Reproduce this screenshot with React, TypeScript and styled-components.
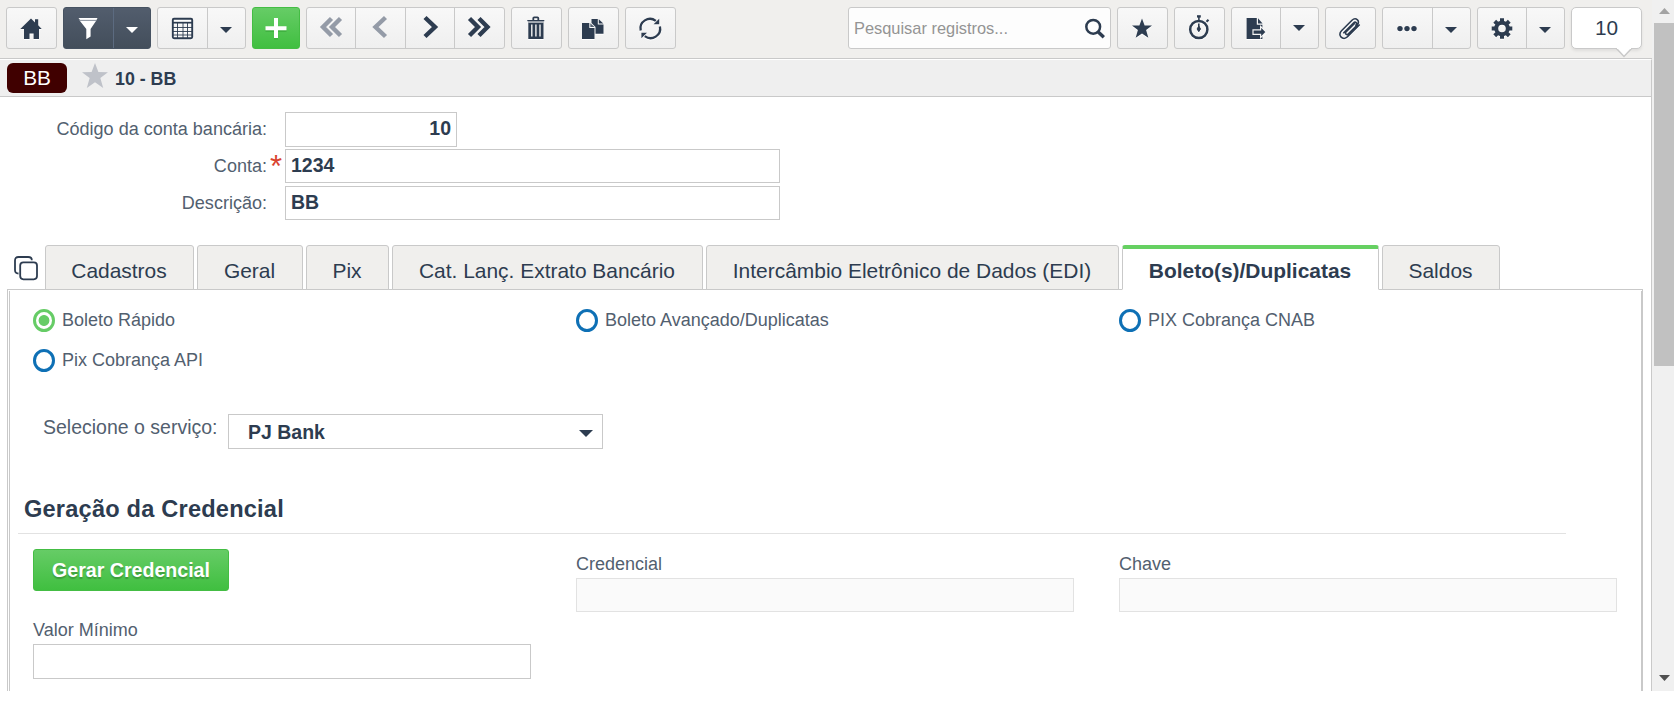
import React from "react";
import styled, { createGlobalStyle, css } from "styled-components";

const ink = "#2d3c50";
const line = "#c9c9c9";

const Global = createGlobalStyle`
  * { box-sizing: border-box; }
  body { margin: 0; background: #fff; font-family: "Liberation Sans", Arial, sans-serif; color: ${ink}; overflow: hidden; }
`;

const Screen = styled.div`
  display: flex;
  width: 1674px;
  height: 691px;
  overflow: hidden;
  background: #fff;
`;

const Main = styled.main`
  width: 1652px;
  height: 691px;
  display: flex;
  flex-direction: column;
  flex: none;
`;

const Toolbar = styled.header`
  height: 59px;
  flex: none;
  padding: 7px 0 0 6px;
  background: #f0efed;
  border-bottom: 1px solid ${line};
  display: flex;
  align-items: flex-start;
  gap: 6px;
`;

const Spacer = styled.div`
  flex: 0 0 160px;
`;

type Tone = "light" | "dark" | "green";

const tones = {
  light: css`
    background: linear-gradient(#f8f8f8, #efefef);
    border-color: ${line};
    color: ${ink};
    --split: ${line};
  `,
  dark: css`
    background: linear-gradient(#525d6d, #434e5b);
    border-color: #465261;
    color: #fff;
    --split: #5c6b80;
  `,
  green: css`
    background: linear-gradient(#66cc66, #40bf40);
    border-color: #44bd44;
    color: #fff;
    --split: #40bf40;
  `,
};

const Group = styled.div<{ $tone?: Tone; $w: number }>`
  display: flex;
  flex: none;
  width: ${(p) => p.$w}px;
  height: 42px;
  border: 1px solid;
  border-radius: 3px;
  ${(p) => tones[p.$tone ?? "light"]}
`;

const Cell = styled.button<{ $w?: number; $muted?: boolean }>`
  ${(p) => (p.$w ? `flex: 0 0 ${p.$w}px;` : "flex: 1;")}
  padding: 0 1px 0 0;
  border: 0;
  background: none;
  display: flex;
  align-items: center;
  justify-content: center;
  color: ${(p) => (p.$muted ? "#949ba7" : "inherit")};
  & + & {
    border-left: 1px solid var(--split);
  }
`;

const Glyph = styled.svg<{ $glow?: boolean }>`
  display: block;
  width: 24px;
  height: 24px;
  flex: none;
  overflow: visible;
  ${(p) => p.$glow && "filter: drop-shadow(0 1.5px 0 #fff);"}
`;

const Caret = styled.span<{ $up?: boolean }>`
  width: 0;
  height: 0;
  margin-top: ${(p) => (p.$up ? 0 : 4)}px;
  border: 6px solid transparent;
  border-top-color: currentColor;
  border-bottom: 0;
`;

const Search = styled.div`
  flex: none;
  width: 263px;
  height: 42px;
  padding: 0 4px 0 5px;
  border: 1px solid ${line};
  border-radius: 3px;
  background: #fdfdfd;
  display: flex;
  align-items: center;
  justify-content: space-between;
  font-size: 16.4px;
  color: #949494;
  svg { color: ${ink}; }
`;

const Counter = styled.div`
  position: relative;
  flex: none;
  width: 71px;
  height: 42px;
  padding-bottom: 1px;
  border: 1px solid ${line};
  border-radius: 5px;
  background: #fff;
  box-shadow: 0 2px 3px rgba(0, 0, 0, 0.07);
  display: flex;
  align-items: center;
  justify-content: center;
  font-size: 20.8px;
  svg {
    position: absolute;
    left: 43px;
    top: 40px;
  }
`;

const TitleBar = styled.div`
  height: 38px;
  flex: none;
  border-top: 1px solid #fff;
  border-bottom: 1px solid ${line};
  border-right: 1px solid ${line};
  background: #efefef;
  display: flex;
  align-items: center;
  padding-left: 7px;
`;

const Badge = styled.span`
  width: 60px;
  height: 30px;
  border-radius: 6px;
  background: #400000;
  color: #fff;
  font-size: 20.8px;
  line-height: 30px;
  text-align: center;
`;

const FavStar = styled.svg`
  width: 26px;
  height: 25px;
  margin: -5px 7px 0 15px;
`;

const Title = styled.h1`
  margin: 2px 0 0;
  font-size: 17.8px;
  font-weight: 700;
`;

const Body = styled.div`
  flex: 1;
  border-right: 1px solid ${line};
  display: flex;
  flex-direction: column;
  min-height: 0;
`;

const Fields = styled.div`
  flex: none;
  height: 148px;
  padding-top: 15px;
`;

const FieldRow = styled.label<{ $h: number; $gap: number }>`
  display: flex;
  height: ${(p) => p.$h}px;
  margin-bottom: ${(p) => p.$gap}px;
`;

const FieldName = styled.span`
  width: 267px;
  text-align: right;
  font-size: 18.05px;
  line-height: 35px;
  color: #52606f;
  white-space: nowrap;
`;

const Mark = styled.span`
  width: 18px;
  padding-left: 3px;
  font-size: 31px;
  line-height: 35px;
  color: #d9432f;
`;

const Box = styled.span<{ $w: number; $right?: boolean }>`
  width: ${(p) => p.$w}px;
  border: 1px solid ${line};
  background: #fff;
  padding: 0 5px;
  font-size: 19.5px;
  font-weight: 700;
  line-height: 31px;
  text-align: ${(p) => (p.$right ? "right" : "left")};
`;

const Tabs = styled.nav`
  flex: none;
  height: 44px;
  padding-left: 13px;
  display: flex;
  position: relative;
  z-index: 1;
`;

const CopyTabs = styled.svg`
  width: 24px;
  height: 25px;
  margin: 11px 7px 0 1px;
  flex: none;
`;

const Tab = styled.div<{ $w: number; $active?: boolean }>`
  flex: none;
  width: ${(p) => p.$w}px;
  height: 45px;
  margin-right: 3px;
  padding: ${(p) => (p.$active ? 9 : 12)}px 1px 0 0;
  border: 1px solid ${line};
  border-radius: 3px 3px 0 0;
  background: #f0efed;
  font-size: 20.95px;
  line-height: 25px;
  text-align: center;
  white-space: nowrap;
  ${(p) =>
    p.$active &&
    css`
      background: #fff;
      border-top: 4px solid #66d062;
      border-bottom-color: #fff;
      font-weight: 700;
    `}
`;

const Frame = styled.section`
  flex: 1;
  min-height: 0;
  width: 1636px;
  margin-left: 7px;
  border: solid ${line};
  border-width: 1px 1px 0;
  padding: 1px 0 0 1px;
  overflow: hidden;
`;

const Pane = styled.div`
  height: 420px;
  border-left: 1px solid ${line};
  border-right: 1px solid ${line};
  padding: 17px 0 0 8px;
`;

const Radios = styled.div`
  display: grid;
  grid-template-columns: repeat(3, 543px);
  row-gap: 16px;
  padding-left: 15px;
`;

const Radio = styled.div`
  display: flex;
  align-items: center;
  height: 24px;
  font-size: 18px;
  color: #52606f;
`;

const Dot = styled.span<{ $on?: boolean }>`
  width: 22px;
  height: 23px;
  margin-right: 7px;
  border-radius: 50%;
  border: 3px solid ${(p) => (p.$on ? "#66cc66" : "#0e70b5")};
  ${(p) => p.$on && "background: radial-gradient(circle, #66cc66 5px, #fff 5.8px);"}
`;

const Service = styled.div`
  display: flex;
  margin: 42px 0 0 25px;
`;

const ServiceName = styled.span`
  width: 185px;
  padding-top: 1px;
  font-size: 19.5px;
  line-height: 24px;
  color: #52606f;
`;

const Select = styled.div`
  width: 375px;
  height: 35px;
  border: 1px solid ${line};
  padding: 1px 9px 0 19px;
  display: flex;
  justify-content: space-between;
  align-items: center;
  font-size: 19.5px;
  font-weight: 700;
`;

const SelectArrow = styled.span`
  border: 7px solid transparent;
  border-top-color: ${ink};
  border-bottom: 0;
  margin-top: 2px;
`;

const Heading = styled.h2`
  width: 1548px;
  height: 47px;
  margin: 38px 0 15px;
  padding: 7px 0 0 6px;
  border-bottom: 1px solid #e2e2e2;
  font-size: 23.6px;
  line-height: 30px;
  letter-spacing: 0.2px;
`;

const Credentials = styled.div`
  display: grid;
  grid-template-columns: repeat(3, 543px);
  padding-left: 15px;
  row-gap: 6px;
`;

const Generate = styled.button`
  width: 196px;
  height: 42px;
  padding: 0;
  font: 700 19.6px "Liberation Sans", Arial, sans-serif;
  border: 1px solid;
  border-radius: 3px;
  ${tones.green}
  text-shadow: 0 2px 1px rgba(0, 0, 0, 0.2);
`;

const Entry = styled.label<{ $top?: number }>`
  display: flex;
  flex-direction: column;
  padding-top: ${(p) => p.$top ?? 0}px;
  font-size: 18px;
  line-height: 24px;
  color: #52606f;
`;

const EntryBox = styled.span<{ $off?: boolean }>`
  width: 498px;
  height: ${(p) => (p.$off ? 34 : 35)}px;
  margin-top: 2px;
  border: 1px solid ${(p) => (p.$off ? "#e2e2e2" : line)};
  background: ${(p) => (p.$off ? "#fafafa" : "#fff")};
`;

const ScrollTrack = styled.aside`
  flex: 1;
  padding-left: 2px;
  background: #f0f0f0;
  display: flex;
  flex-direction: column;
  justify-content: space-between;
`;

const ScrollTop = styled.div`
  display: flex;
  flex-direction: column;
  height: 366px;
`;

const Thumb = styled.div`
  flex: 1;
  background: #c1c1c1;
`;

const Arrow = styled.svg`
  width: 20px;
  height: 23px;
`;

const starPath = "M12 2.5 14.6 9.4 22 9.6 16.1 14 18.3 21.8 12 17.4 5.7 21.8 7.9 14 2 9.6 9.4 9.4Z";

const HomeIcon = () => (
  <Glyph $glow viewBox="0 0 24 24" fill="currentColor">
    <path d="M12 2.500 16 6.500V3.200h3.200v6L22.700 13H20v10h-5.400v-5.500H10.500V23H5V13H1.300Z" />
  </Glyph>
);
const FunnelIcon = () => (
  <Glyph viewBox="0 0 24 24">
    <path d="M2.500 2h19l-1 2H4Z" fill="#fff" />
    <path d="M4 5h16L14.600 13v7.400L10.300 23.200V13Z" fill="#fff" />
    <path d="M3.500 4.300h17" stroke="#a9b0ba" strokeWidth="1" />
  </Glyph>
);
const TableIcon = () => (
  <Glyph $glow viewBox="0 0 24 24" fill="none" stroke="currentColor">
    <rect x="2.800" y="2.800" width="19.400" height="19.400" rx="1.200" strokeWidth="1.900" />
    <path d="M2.600 6.700H22" strokeWidth="1.700" />
    <path d="M3 11.500h19M3 15.500h19M3 19h19M7.500 7v15M13 7v15M17.500 7v15" strokeWidth="0.900" />
  </Glyph>
);
const PlusIcon = () => (
  <Glyph viewBox="0 0 24 24">
    <path d="M12 3.500v20M1.500 14h21" stroke="#37a637" strokeWidth="4" opacity=".6" />
    <path d="M12 2v20M1.500 12.300h21" stroke="#fff" strokeWidth="4" />
  </Glyph>
);
const Chevron = ({ d }: { d: string }) => (
  <Glyph viewBox="0 0 24 24" fill="none" stroke="currentColor" strokeWidth="4.400">
    <path d={d} />
  </Glyph>
);
const TrashIcon = () => (
  <Glyph $glow viewBox="0 0 24 24" fill="currentColor">
    <path d="M8.400 4V2.200Q8.400.4 10.200.4h3.200q1.800 0 1.800 1.800V4h-1.800V2.200h-3.200V4Z" />
    <path d="M3.300 4h17v1.200h-17Z" />
    <path d="M4 5.400h15.800v1.400H4Z" opacity=".5" />
    <path d="M4.300 7h15.200v16H4.300Z" />
    <path d="M7.800 8.500v12M11.900 8.500v12M16 8.500v12" stroke="#f3f3f3" strokeWidth="1.400" />
  </Glyph>
);
const DuplicateIcon = () => (
  <Glyph $glow viewBox="0 0 24 24" fill="currentColor">
    <path d="M10.500 3h6.300v5.400h5.700v9.400h-8V11l-4-4Z" />
    <path d="M17.800 3.200 22.300 7.400h-4.500Z" />
    <path d="M1 7h7.300v5h5.200v11H1Z" />
    <path d="M9.300 7.200 13.500 11H9.300Z" opacity=".8" />
  </Glyph>
);
const RefreshIcon = () => (
  <Glyph $glow viewBox="0 0 24 24" fill="none" stroke="currentColor" strokeWidth="2.300">
    <path d="M2.700 14.500A9.500 9.500 0 0 1 17.800 4.900M21.900 10.500A9.500 9.500 0 0 1 6.800 20.100" />
    <path d="M21.200 2.800v5.400h-5.600ZM3.400 22.200v-5.400h5.600Z" fill="currentColor" stroke="none" />
  </Glyph>
);
const SearchIcon = () => (
  <Glyph viewBox="0 0 24 24" fill="none" stroke="currentColor">
    <circle cx="11.200" cy="10.800" r="6.900" strokeWidth="2.500" />
    <path d="m16 15.800 5.800 5.500" strokeWidth="3.400" />
  </Glyph>
);
const StarIcon = () => (
  <Glyph $glow viewBox="0 0 24 24" fill="currentColor">
    <path d={starPath} />
  </Glyph>
);
const TimerIcon = () => (
  <Glyph $glow viewBox="0 0 24 24" fill="none" stroke="currentColor">
    <circle cx="11.800" cy="13.500" r="8.600" strokeWidth="2.500" />
    <path d="M10 .4h3.800" strokeWidth="2.400" />
    <path d="M11.900 1v3.500" strokeWidth="1.600" />
    <path d="m19.500 5.700 2-2" strokeWidth="2.200" />
    <path d="M11.800 7.500v7" strokeWidth="1.600" />
    <path d="m11.800 10 1.700 3-1.700 2.700-1.700-2.700Z" fill="currentColor" />
  </Glyph>
);
const ExportIcon = () => (
  <Glyph $glow viewBox="0 0 24 24" fill="currentColor">
    <path d="M2.600 2h10.200v6.800h5.600V23H2.600Z" />
    <path d="M14 2.200 18.600 7.400H14Z" />
    <path d="M9 13.800h7.600v-3.400L22.200 16l-5.600 5.600v-3.200H9Z" stroke="#f4f4f4" strokeWidth="1.200" />
  </Glyph>
);
const ClipIcon = () => (
  <Glyph $glow viewBox="0 0 24 24" fill="none" stroke="currentColor" strokeWidth="1.600" strokeLinecap="round">
    <path d="M16.300 7.700 8 16c-1.500 1.500.7 3.600 2.200 2.100L19 9.300c4-4-1.200-8.800-5-5L3.500 14.800c-4.600 4.600 1.600 10.400 6 6L21.300 9M5.800 16.800 15.500 7c2-2 4.200.3 2.300 2.200" />
  </Glyph>
);
const DotsIcon = () => (
  <Glyph $glow viewBox="0 0 24 24" fill="currentColor">
    <circle cx="5" cy="12.600" r="2.700" />
    <circle cx="12" cy="12.600" r="2.700" />
    <circle cx="19" cy="12.600" r="2.700" />
  </Glyph>
);
const GearIcon = () => (
  <Glyph $glow viewBox="0 0 24 24" fill="none" stroke="currentColor">
    <circle cx="12" cy="12.500" r="5.800" strokeWidth="4" />
    <g strokeWidth="4">
      {[0, 45, 90, 135].map((a) => (
        <path key={a} d="M12 2.200v3.500M12 19.300v3.500" transform={`rotate(${a} 12 12.5)`} />
      ))}
    </g>
  </Glyph>
);

const tabs = [
  { label: "Cadastros", w: 149 },
  { label: "Geral", w: 106 },
  { label: "Pix", w: 83 },
  { label: "Cat. Lanç. Extrato Bancário", w: 311 },
  { label: "Intercâmbio Eletrônico de Dados (EDI)", w: 413 },
  { label: "Boleto(s)/Duplicatas", w: 257, active: true },
  { label: "Saldos", w: 118 },
];

const options = ["Boleto Rápido", "Boleto Avançado/Duplicatas", "PIX Cobrança CNAB", "Pix Cobrança API"];

export default function App() {
  return (
    <>
      <Global />
      <Screen>
        <Main>
          <Toolbar>
            <Group $w={51}><Cell><HomeIcon /></Cell></Group>
            <Group $w={88} $tone="dark"><Cell $w={49}><FunnelIcon /></Cell><Cell><Caret /></Cell></Group>
            <Group $w={89}><Cell $w={49}><TableIcon /></Cell><Cell><Caret /></Cell></Group>
            <Group $w={48} $tone="green"><Cell><PlusIcon /></Cell></Group>
            <Group $w={199}>
              <Cell $w={48} $muted><Chevron d="M12.500 2.500 4 11l8.500 8.500M21.500 2.500 13 11l8.500 8.500" /></Cell>
              <Cell $w={50} $muted><Chevron d="M17.500 1.500 7.500 11l10 9.500" /></Cell>
              <Cell $w={49}><Chevron d="M7 1.500 17 11 7 20.500" /></Cell>
              <Cell><Chevron d="M2.500 2.500 11 11l-8.500 8.500M12 2.500 20.500 11 12 19.500" /></Cell>
            </Group>
            <Group $w={51}><Cell><TrashIcon /></Cell></Group>
            <Group $w={51}><Cell><DuplicateIcon /></Cell></Group>
            <Group $w={51}><Cell><RefreshIcon /></Cell></Group>
            <Spacer />
            <Search><span>Pesquisar registros...</span><SearchIcon /></Search>
            <Group $w={51}><Cell><StarIcon /></Cell></Group>
            <Group $w={51}><Cell><TimerIcon /></Cell></Group>
            <Group $w={88}><Cell $w={48}><ExportIcon /></Cell><Cell><Caret $up /></Cell></Group>
            <Group $w={51}><Cell><ClipIcon /></Cell></Group>
            <Group $w={89}><Cell $w={49}><DotsIcon /></Cell><Cell><Caret /></Cell></Group>
            <Group $w={88}><Cell $w={48}><GearIcon /></Cell><Cell><Caret /></Cell></Group>
            <Counter>
              10
              <svg width="18" height="10" viewBox="0 0 18 10">
                <path d="M1 0 9 8.500 17 0" fill="#fff" stroke={line} strokeWidth="1.500" />
                <path d="M2 0h14" stroke="#fff" strokeWidth="2" />
              </svg>
            </Counter>
          </Toolbar>
          <TitleBar>
            <Badge>BB</Badge>
            <FavStar viewBox="2 2.500 20 19.300" preserveAspectRatio="none"><path d={starPath} fill="#bfc2c9" /></FavStar>
            <Title>10 - BB</Title>
          </TitleBar>
          <Body>
            <Fields>
              <FieldRow $h={35} $gap={2}><FieldName>Código da conta bancária:</FieldName><Mark /><Box $w={172} $right>10</Box></FieldRow>
              <FieldRow $h={34} $gap={3}><FieldName>Conta:</FieldName><Mark>*</Mark><Box $w={495}>1234</Box></FieldRow>
              <FieldRow $h={34} $gap={0}><FieldName>Descrição:</FieldName><Mark /><Box $w={495}>BB</Box></FieldRow>
            </Fields>
            <Tabs>
              <CopyTabs viewBox="0 0 24 25" fill="none" stroke={ink} strokeWidth="1.800">
                <rect x="6.200" y="6.300" width="16.800" height="17" rx="3.200" />
                <path d="M4.500 17.500Q1 17.500 1 14V4.500Q1 1 4.500 1h9.700q3.600 0 3.600 3.300" />
              </CopyTabs>
              {tabs.map((t) => (
                <Tab key={t.label} $w={t.w} $active={t.active}>{t.label}</Tab>
              ))}
            </Tabs>
            <Frame>
              <Pane>
                <Radios>
                  {options.map((o, i) => (
                    <Radio key={o}><Dot $on={i === 0} />{o}</Radio>
                  ))}
                </Radios>
                <Service>
                  <ServiceName>Selecione o serviço:</ServiceName>
                  <Select>PJ Bank<SelectArrow /></Select>
                </Service>
                <Heading>Geração da Credencial</Heading>
                <Credentials>
                  <div><Generate>Gerar Credencial</Generate></div>
                  <Entry $top={3}>Credencial<EntryBox $off /></Entry>
                  <Entry $top={3}>Chave<EntryBox $off /></Entry>
                  <Entry>Valor Mínimo<EntryBox /></Entry>
                </Credentials>
              </Pane>
            </Frame>
          </Body>
        </Main>
        <ScrollTrack>
          <ScrollTop>
            <Arrow viewBox="0 0 20 23"><path d="M5 14h11l-5.500-6Z" fill="#a3a3a3" /></Arrow>
            <Thumb />
          </ScrollTop>
          <Arrow viewBox="0 0 20 23"><path d="M5 7h11l-5.500 6Z" fill="#505050" /></Arrow>
        </ScrollTrack>
      </Screen>
    </>
  );
}
